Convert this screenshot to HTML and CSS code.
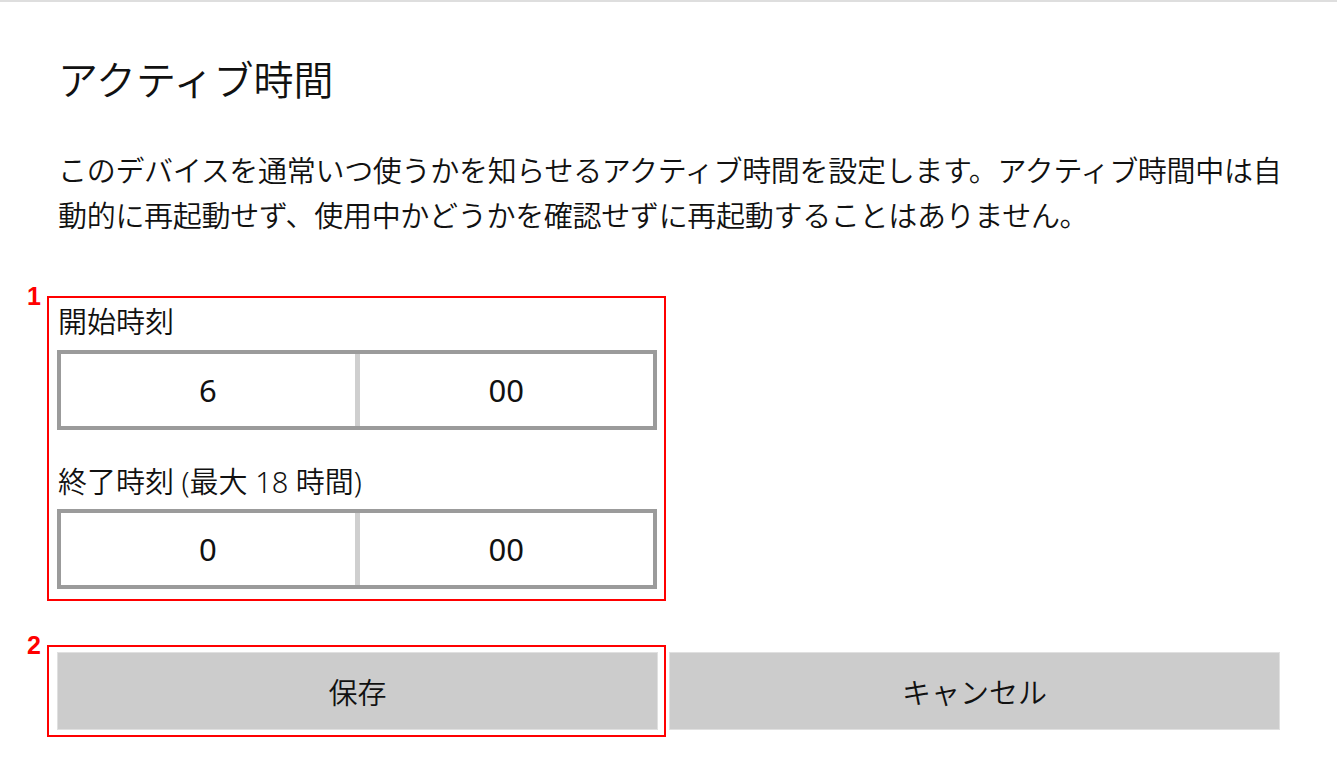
FILE: index.html
```html
<!DOCTYPE html>
<html lang="ja">
<head>
    <meta charset="utf-8">
    <link rel="stylesheet" href="styles.css">
</head>
<body>
    <div class="topline"></div>
    <div class="page">
        <h1 class="title">アクティブ時間</h1>
        <p class="desc">このデバイスを通常いつ使うかを知らせるアクティブ時間を設定します。アクティブ時間中は自動的に再起動せず、使用中かどうかを確認せずに再起動することはありません。</p>

        <div class="mark mark-fields">
            <span class="mark-num">1</span>
            <div class="field-label">開始時刻</div>
            <div class="time-box">
                <div class="time-cell">6</div>
                <div class="time-cell">00</div>
            </div>
            <div class="field-label second">終了時刻 (最大 18 時間)</div>
            <div class="time-box">
                <div class="time-cell">0</div>
                <div class="time-cell">00</div>
            </div>
        </div>

        <div class="actions">
            <div class="mark mark-save">
                <span class="mark-num">2</span>
                <button class="btn btn-save">保存</button>
            </div>
            <button class="btn btn-cancel">キャンセル</button>
        </div>
    </div>
</body>
</html>
```

FILE: styles.css
```css
body {
    margin: 0;
    background: #fff;
    color: #111;
    font-family: "Noto Sans", "Noto Sans CJK JP", sans-serif;
    font-weight: 350;
}

.topline {
    height: 2px;
    background: #dedede;
}

.page {
    padding: 0 57px 0 47px;
}

.title {
    margin: 54px 0 0 11px;
    font-size: 40px;
    font-weight: 350;
    line-height: 48px;
}

.desc {
    width: 1245px;
    margin: 44px 0 0 11px;
    font-size: 29px;
    line-height: 45px;
    letter-spacing: -0.3px;
}

/* red annotation frames */
.mark {
    position: relative;
    border: 2px solid #ff0000;
}

.mark-num {
    position: absolute;
    left: -22px;
    top: -14px;
    color: #ff0000;
    font-family: "Liberation Sans", Arial, sans-serif;
    font-weight: bold;
    font-size: 25px;
    line-height: 25px;
}

.mark-fields {
    width: 619px;
    height: 305px;
    margin-top: 58px;
    padding: 4px 0 9px 8px;
    box-sizing: border-box;
}

.field-label {
    margin-left: 1px;
    font-size: 29px;
    line-height: 40px;
}

.field-label.second {
    margin-top: 32px;
}

.time-box {
    display: flex;
    width: 600px;
    height: 80px;
    margin-top: 8px;
    box-sizing: border-box;
    border: 4px solid #9b9b9b;
    background: #fff;
}

.field-label.second + .time-box {
    margin-top: 7px;
}

.time-cell {
    flex: 1;
    display: flex;
    align-items: center;
    justify-content: center;
    font-size: 31px;
    font-weight: 400;
}

.time-cell + .time-cell {
    border-left: 5px solid #cfcfcf;
}

.actions {
    display: flex;
    align-items: center;
    gap: 3px;
    margin-top: 44px;
}

.mark-save {
    padding: 5px 6px 5px 8px;
    display: flex;
}

.btn {
    height: 78px;
    border: 1px solid #e0e0e0;
    background: #cccccc;
    color: #111;
    font-family: "Noto Sans", "Noto Sans CJK JP", sans-serif;
    font-weight: 350;
    font-size: 29px;
    padding: 0;
}

.btn-save {
    width: 601px;
}

.btn-cancel {
    width: 611px;
}
```
